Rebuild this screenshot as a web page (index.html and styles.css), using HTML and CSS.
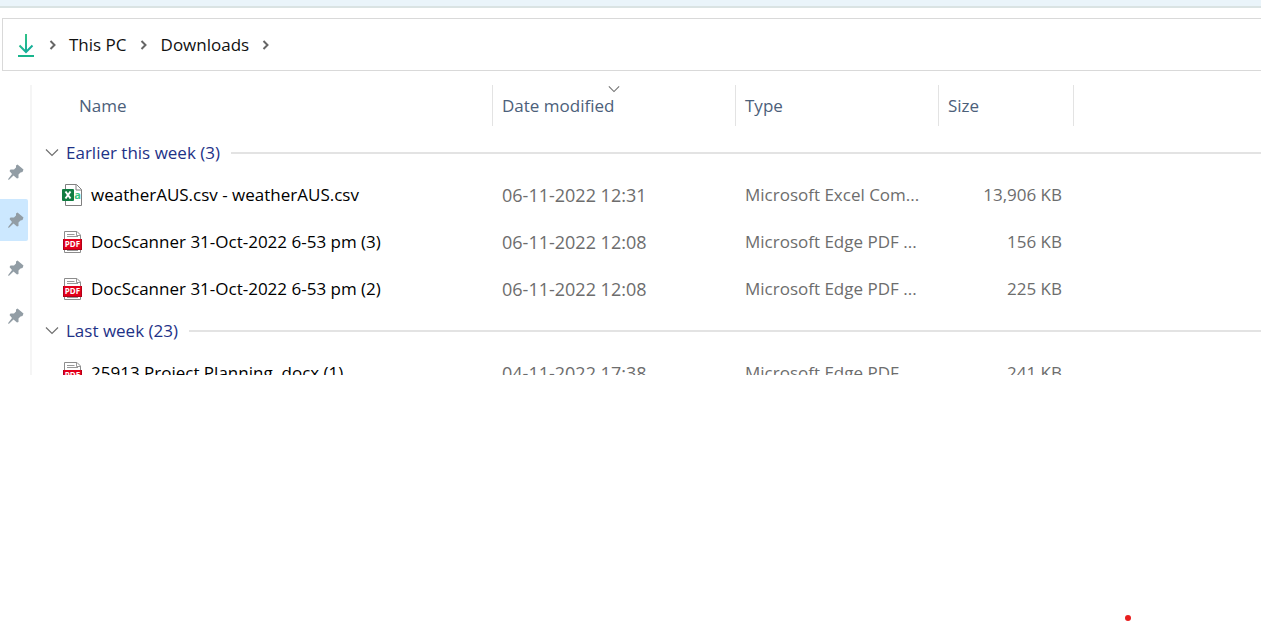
FILE: index.html
```html
<!DOCTYPE html>
<html lang="en">
<head>
<meta charset="utf-8">
<title>Downloads</title>
<link rel="stylesheet" href="styles.css">
</head>
<body>
<svg class="defs" aria-hidden="true">
  <defs>
    <linearGradient id="dl" x1="0" y1="0" x2="16" y2="20" gradientUnits="userSpaceOnUse"><stop offset="0" stop-color="#3ccb7f"/><stop offset="1" stop-color="#0aa5a0"/></linearGradient>
    <symbol id="pin" viewBox="0 0 16 16"><path d="M9.5.5 15.500 5.500 14.500 8 12.500 8.500 10.500 10.500 10.500 14 9 14.500 5.500 11.500 1 15.800H.2V15L4 10 1.500 7 2.500 5.500H6L8 3.500V1.500Z" fill="#929da5"/></symbol>
    <symbol id="crumb" viewBox="0 0 8 10"><path d="M1.500 1 5.500 5 1.500 9" fill="none" stroke="#666" stroke-width="2"/></symbol>
    <symbol id="down" viewBox="0 0 14 9"><path d="M1 1.500 7 7.500 13 1.500" fill="none" stroke="#707070" stroke-width="1.200"/></symbol>
    <symbol id="pdf" viewBox="-1 0 20 22">
      <path d="M1.500.5H14L17.500 4V21.500H1.500Z" fill="#fff" stroke="#8c8c8c"/>
      <path d="M13.500.5V4.500H17.500M4 3.500H11.500M4 5.500H15M4 19.500H15" fill="none" stroke="#999"/>
      <path d="M0 8H19V19H0Z" fill="#e3001b"/>
      <path d="M0 18.500H19M.5 8V19M18.500 8V19" stroke="#b20018" fill="none"/>
      <text x="9.500" y="16" class="pdf-text">PDF</text>
    </symbol>
    <symbol id="csv" viewBox="0 0 20 22">
      <path d="M3.500.5H14.500L19.500 5.500V21.500H3.500Z" fill="#fff" stroke="#808080"/>
      <path d="M14 .5V6H19.500" fill="none" stroke="#808080"/>
      <rect x="0" y="5" width="12" height="12" rx="1" fill="#107c41"/>
      <path d="M3.500 7.500 8.500 14.500M8.500 7.500 3.500 14.500" stroke="#fff" stroke-width="2"/>
      <text x="15.500" y="15" class="csv-text">a</text>
    </symbol>
  </defs>
</svg>
<div class="band"></div>
<nav class="address" aria-label="Address">
  <svg class="dl-icon" viewBox="0 0 16 24"><path d="M8 1V19M1.500 12.500 8 19 14.500 12.500" fill="none" stroke="url(#dl)" stroke-width="2"/><rect x="0" y="22" width="16" height="2" fill="#19b58d"/></svg>
  <svg class="crumb"><use href="#crumb"/></svg>
  <a href="#pc">This PC</a>
  <svg class="crumb"><use href="#crumb"/></svg>
  <a href="#downloads">Downloads</a>
  <svg class="crumb"><use href="#crumb"/></svg>
</nav>
<div class="explorer">
  <aside class="pins">
    <button class="pin" aria-label="Pinned folder 1"><svg><use href="#pin"/></svg></button>
    <button class="pin selected" aria-label="Pinned folder 2"><svg><use href="#pin"/></svg></button>
    <button class="pin" aria-label="Pinned folder 3"><svg><use href="#pin"/></svg></button>
    <button class="pin" aria-label="Pinned folder 4"><svg><use href="#pin"/></svg></button>
  </aside>
  <main class="list">
    <table class="files">
      <colgroup><col class="c-name"><col class="c-date"><col class="c-type"><col class="c-size"><col></colgroup>
      <thead>
        <tr>
          <th><div class="head first">Name</div></th>
          <th><div class="head">Date modified<svg class="sort"><use href="#down"/></svg></div></th>
          <th><div class="head">Type</div></th>
          <th><div class="head">Size</div></th>
          <td></td>
        </tr>
      </thead>
      <tbody>
        <tr class="group"><th colspan="5"><button class="group-btn"><svg><use href="#down"/></svg>Earlier this week (3)</button></th></tr>
        <tr class="file"><td><div class="name"><svg><use href="#csv"/></svg>weatherAUS.csv - weatherAUS.csv</div></td><td class="date">06-11-2022 12:31</td><td>Microsoft Excel Com...</td><td class="size">13,906 KB</td><td></td></tr>
        <tr class="file"><td><div class="name"><svg><use href="#pdf"/></svg>DocScanner 31-Oct-2022 6-53 pm (3)</div></td><td class="date">06-11-2022 12:08</td><td>Microsoft Edge PDF ...</td><td class="size">156 KB</td><td></td></tr>
        <tr class="file"><td><div class="name"><svg><use href="#pdf"/></svg>DocScanner 31-Oct-2022 6-53 pm (2)</div></td><td class="date">06-11-2022 12:08</td><td>Microsoft Edge PDF ...</td><td class="size">225 KB</td><td></td></tr>
      </tbody>
      <tbody>
        <tr class="group"><th colspan="5"><button class="group-btn"><svg><use href="#down"/></svg>Last week (23)</button></th></tr>
        <tr class="file"><td><div class="name"><svg><use href="#pdf"/></svg>25913 Project Planning .docx (1)</div></td><td class="date">04-11-2022 17:38</td><td>Microsoft Edge PDF ...</td><td class="size">241 KB</td><td></td></tr>
      </tbody>
    </table>
  </main>
</div>
<span class="dot"></span>
</body>
</html>
```
FILE: styles.css
```css
* { box-sizing: border-box; }
body {
  margin: 0;
  background: #fff;
  font: 17px/24px "Open Sans", "Noto Sans", sans-serif;
  color: #111;
}
button { font: inherit; border: 0; background: none; padding: 0; }
svg { flex: none; }
.defs { position: absolute; width: 0; height: 0; }
.band { height: 8px; background: #eaf4fa; border-bottom: 2px solid #dae3e3; }
.address {
  display: flex;
  align-items: center;
  height: 53px;
  margin: 10px 0 0 2px;
  padding-left: 15px;
  border: 1px solid #d9d9d9;
  border-right: 0;
}
.address a { color: inherit; text-decoration: none; }
.dl-icon { width: 16px; height: 24px; }
.crumb { width: 8px; height: 10px; margin: 0 13px; }
.dl-icon + .crumb { margin: 0 12px 0 15px; }
.explorer { display: flex; max-height: 290px; margin-top: 14px; overflow: hidden; }
.pins {
  display: flex;
  flex: none;
  flex-direction: column;
  gap: 6px;
  width: 32px;
  padding-top: 66px;
  border-right: 2px solid #f5f5f5;
}
.pin { display: flex; align-items: center; width: 28px; height: 42px; padding-left: 8px; flex: none; }
.pin svg { width: 16px; height: 16px; }
.selected { background: #cce8ff; border-radius: 0 2px 2px 0; }
.list { flex: 1; min-width: 0; }
.files { width: 100%; table-layout: fixed; border-collapse: collapse; }
.files th, .files td { padding: 0; text-align: left; font-weight: 400; white-space: nowrap; }
.c-name { width: 461px; }
.c-date { width: 243px; }
.c-type { width: 203px; }
.c-size { width: 135px; }
.files thead th { height: 49px; vertical-align: top; color: #4c607a; }
.head {
  position: relative;
  display: flex;
  align-items: center;
  height: 41px;
  padding-left: 9px;
  border-right: 1px solid #e3e3e3;
}
.head.first { padding-left: 47px; }
.sort { position: absolute; left: calc(50% - 6px); top: 0; width: 12px; height: 8px; }
.group th { height: 37px; }
.group-btn { display: flex; align-items: center; width: 100%; padding-left: 13px; color: #1e3287; }
.group-btn svg { width: 14px; height: 9px; margin-right: 7px; }
.group-btn::after { content: ""; flex: 1; height: 2px; margin-left: 11px; background: #e3e3e3; }
.files .file td { height: 47px; padding-left: 9px; color: #6d6d6d; }
.files .file td:first-child { padding-left: 30px; color: #000; }
.files .file .date { font-size: 18px; }
.files .file .size { padding-right: 12px; text-align: right; }
.name { display: flex; align-items: center; gap: 9px; }
.name svg { width: 20px; height: 22px; }
.pdf-text { font: 700 8px "Open Sans", sans-serif; fill: #fff; text-anchor: middle; }
.csv-text { font: 700 11px "Open Sans", sans-serif; fill: #33c481; text-anchor: middle; }
.dot { position: absolute; left: 1125px; top: 615px; width: 6px; height: 6px; border-radius: 50%; background: #e81e1e; }
```
